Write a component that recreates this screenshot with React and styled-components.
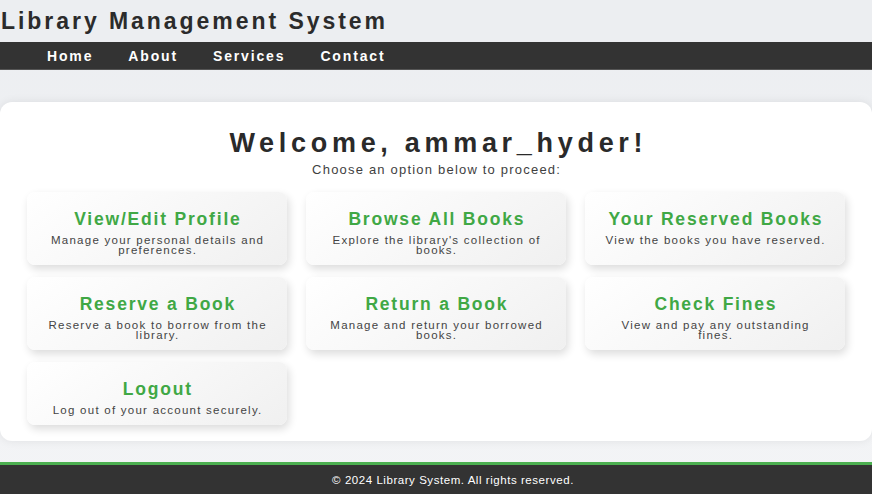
import React from "react";
import styled, { createGlobalStyle } from "styled-components";

const GlobalStyle = createGlobalStyle`
  html, body {
    margin: 0;
    padding: 0;
  }
  body {
    font-family: "Liberation Sans", Arial, Helvetica, sans-serif;
    background: linear-gradient(to bottom, #eceef1, #f3f4f6);
  }
  * { box-sizing: border-box; }
`;

const Page = styled.div`
  min-height: 100vh;
  display: flex;
  flex-direction: column;
`;

const Header = styled.header`
  height: 42px;
  display: flex;
  align-items: center;
  padding: 0 1px;
  background: #eceef1;
`;

const Title = styled.h1`
  margin: 0;
  font-size: 23px;
  line-height: 24px;
  font-weight: 700;
  letter-spacing: 2.95px;
  color: #2b2b2b;
`;

const Nav = styled.nav`
  height: 28px;
  display: flex;
  align-items: center;
  gap: 35px;
  padding-left: 47px;
  background: #333333;
  border-bottom: 1px solid #555;
`;

const NavLink = styled.a`
  color: #ffffff;
  font-size: 14px;
  font-weight: 700;
  letter-spacing: 1.85px;
  text-decoration: none;
`;

const Main = styled.main`
  padding-top: 32px;
`;

const Container = styled.section`
  background: #ffffff;
  border-radius: 12px;
  box-shadow: 0 0 10px rgba(0, 0, 0, 0.08);
  padding: 26px 27px 16px;
  text-align: center;
`;

const Heading = styled.h2`
  margin: 0;
  font-size: 27px;
  line-height: 30px;
  font-weight: 700;
  letter-spacing: 4.7px;
  padding-left: 4.7px;
  color: #2a2a2a;
`;

const Subtitle = styled.p`
  margin: 5px 0 0;
  font-size: 13px;
  line-height: 14px;
  letter-spacing: 1.2px;
  padding-left: 1.2px;
  color: #3f3f3f;
`;

const Grid = styled.div`
  margin-top: 15px;
  display: grid;
  grid-template-columns: repeat(3, 260px);
  column-gap: 19px;
  row-gap: 12px;
`;

const Card = styled.a`
  display: block;
  padding: 18px 19px 10px;
  border-radius: 8px;
  background: linear-gradient(145deg, #ffffff 0%, #f0f0f0 100%);
  box-shadow: 2px 4px 8px rgba(0, 0, 0, 0.14);
  text-decoration: none;
  text-align: center;
`;

const CardTitle = styled.h3`
  margin: 0;
  font-size: 17.5px;
  line-height: 18px;
  font-weight: 700;
  letter-spacing: 1.8px;
  padding-left: 1.8px;
  color: #40a845;
`;

const CardText = styled.p`
  margin: 7px 0 0;
  font-size: 11.5px;
  line-height: 10px;
  letter-spacing: 1.25px;
  padding-left: 1.25px;
  color: #444;
`;

const Footer = styled.footer`
  margin-top: auto;
  border-top: 3px solid #4caf50;
  background: #333333;
  height: 32px;
  display: flex;
  align-items: center;
  justify-content: center;
  padding-left: 34px;
  color: #ffffff;
  font-size: 11.5px;
  letter-spacing: 0.55px;
`;

const options = [
  { title: "View/Edit Profile", text: "Manage your personal details and preferences." },
  { title: "Browse All Books", text: "Explore the library's collection of books." },
  { title: "Your Reserved Books", text: "View the books you have reserved." },
  { title: "Reserve a Book", text: "Reserve a book to borrow from the library." },
  { title: "Return a Book", text: "Manage and return your borrowed books." },
  { title: "Check Fines", text: "View and pay any outstanding fines." },
  { title: "Logout", text: "Log out of your account securely." },
];

export default function App() {
  return (
    <>
      <GlobalStyle />
      <Page>
        <Header>
          <Title>Library Management System</Title>
        </Header>
        <Nav>
          <NavLink href="#">Home</NavLink>
          <NavLink href="#">About</NavLink>
          <NavLink href="#">Services</NavLink>
          <NavLink href="#">Contact</NavLink>
        </Nav>
        <Main>
          <Container>
            <Heading>Welcome, ammar_hyder!</Heading>
            <Subtitle>Choose an option below to proceed:</Subtitle>
            <Grid>
              {options.map((o) => (
                <Card href="#" key={o.title}>
                  <CardTitle>{o.title}</CardTitle>
                  <CardText>{o.text}</CardText>
                </Card>
              ))}
            </Grid>
          </Container>
        </Main>
        <Footer>© 2024 Library System. All rights reserved.</Footer>
      </Page>
    </>
  );
}
